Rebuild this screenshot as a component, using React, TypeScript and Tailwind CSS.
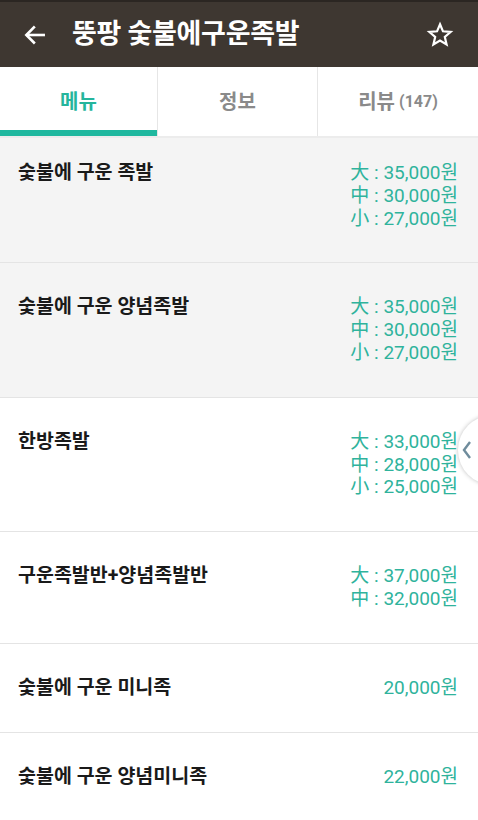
import React from "react";

type Item = { name: string; prices: string[] };

const items: Item[] = [
  { name: "숯불에 구운 족발", prices: ["大 : 35,000원", "中 : 30,000원", "小 : 27,000원"] },
  { name: "숯불에 구운 양념족발", prices: ["大 : 35,000원", "中 : 30,000원", "小 : 27,000원"] },
  { name: "한방족발", prices: ["大 : 33,000원", "中 : 28,000원", "小 : 25,000원"] },
  { name: "구운족발반+양념족발반", prices: ["大 : 37,000원", "中 : 32,000원"] },
  { name: "숯불에 구운 미니족", prices: ["20,000원"] },
  { name: "숯불에 구운 양념미니족", prices: ["22,000원"] },
];

export default function App() {
  return (
    <div
      className="relative w-[478px] h-[820px] overflow-hidden bg-white"
      style={{ fontFamily: 'Roboto, "Noto Sans CJK KR", sans-serif' }}
    >
      {/* Header */}
      <div className="h-[67px] bg-[#3e3731] border-t-2 border-[#2b2622] flex items-center">
        <svg width="26" height="26" viewBox="0 0 24 24" className="ml-[22px]" fill="none" stroke="white" strokeWidth="2.4" strokeLinecap="square">
          <path d="M20 12H5" />
          <path d="M11 5l-7 7 7 7" />
        </svg>
        <div className="ml-[24px] text-white text-[27px] font-bold leading-none tracking-[-0.3px]">뚱팡 숯불에구운족발</div>
        <div className="flex-1" />
        <svg width="28" height="28" viewBox="0 0 24 24" className="mr-[24px]" fill="none" stroke="white" strokeWidth="1.9" strokeLinejoin="miter">
          <path d="M12 2.8l2.55 6.05 6.55.55-4.97 4.3 1.5 6.4L12 16.7l-5.63 3.4 1.5-6.4-4.97-4.3 6.55-.55z" />
        </svg>
      </div>

      {/* Tabs */}
      <div className="h-[71px] flex border-b-2 border-[#ececec]">
        <div className="w-[158px] flex flex-col border-r border-[#e6e6e6]">
          <div className="flex-1 flex items-center justify-center text-[20px] font-bold text-[#25b59c] pt-[6px]">메뉴</div>
          <div className="h-[6px] bg-[#1fb89f]" />
        </div>
        <div className="w-[160px] flex items-center justify-center border-r border-[#e6e6e6] text-[20px] font-bold text-[#8a8a8a]">정보</div>
        <div className="flex-1 flex items-center justify-center text-[20px] font-bold text-[#8a8a8a]">
          리뷰<span className="ml-[4px] text-[16px]">(147)</span>
        </div>
      </div>

      {/* List */}
      <div className="flex flex-col">
        {items.map((it, i) => (
          <div
            key={i}
            className={`flex justify-between border-b border-[#e4e4e4] pl-[18px] pr-[20px] pb-[32px] ${
              i < 2 ? "bg-[#f4f4f4]" : "bg-white"
            } ${i === 0 ? "pt-[24px]" : "pt-[33px]"}`}
          >
            <div className="text-[19.5px] font-bold text-[#1a1a1a] leading-[22px]">{it.name}</div>
            <div className="flex flex-col items-end text-[19px] text-[#2fb39c] leading-[22.8px]">
              {it.prices.map((p, j) => (
                <div key={j}>{p}</div>
              ))}
            </div>
          </div>
        ))}
      </div>

      {/* Side handle */}
      <div className="absolute left-[458px] top-[415px] w-[70px] h-[70px] rounded-full bg-white shadow-[0_0_4px_rgba(0,0,0,0.25)] flex items-center pl-[4px]">
        <svg width="10" height="20" viewBox="0 0 10 20" fill="none" stroke="#6f8c9c" strokeWidth="2.4">
          <path d="M8 2L2 10l6 8" />
        </svg>
      </div>
    </div>
  );
}
